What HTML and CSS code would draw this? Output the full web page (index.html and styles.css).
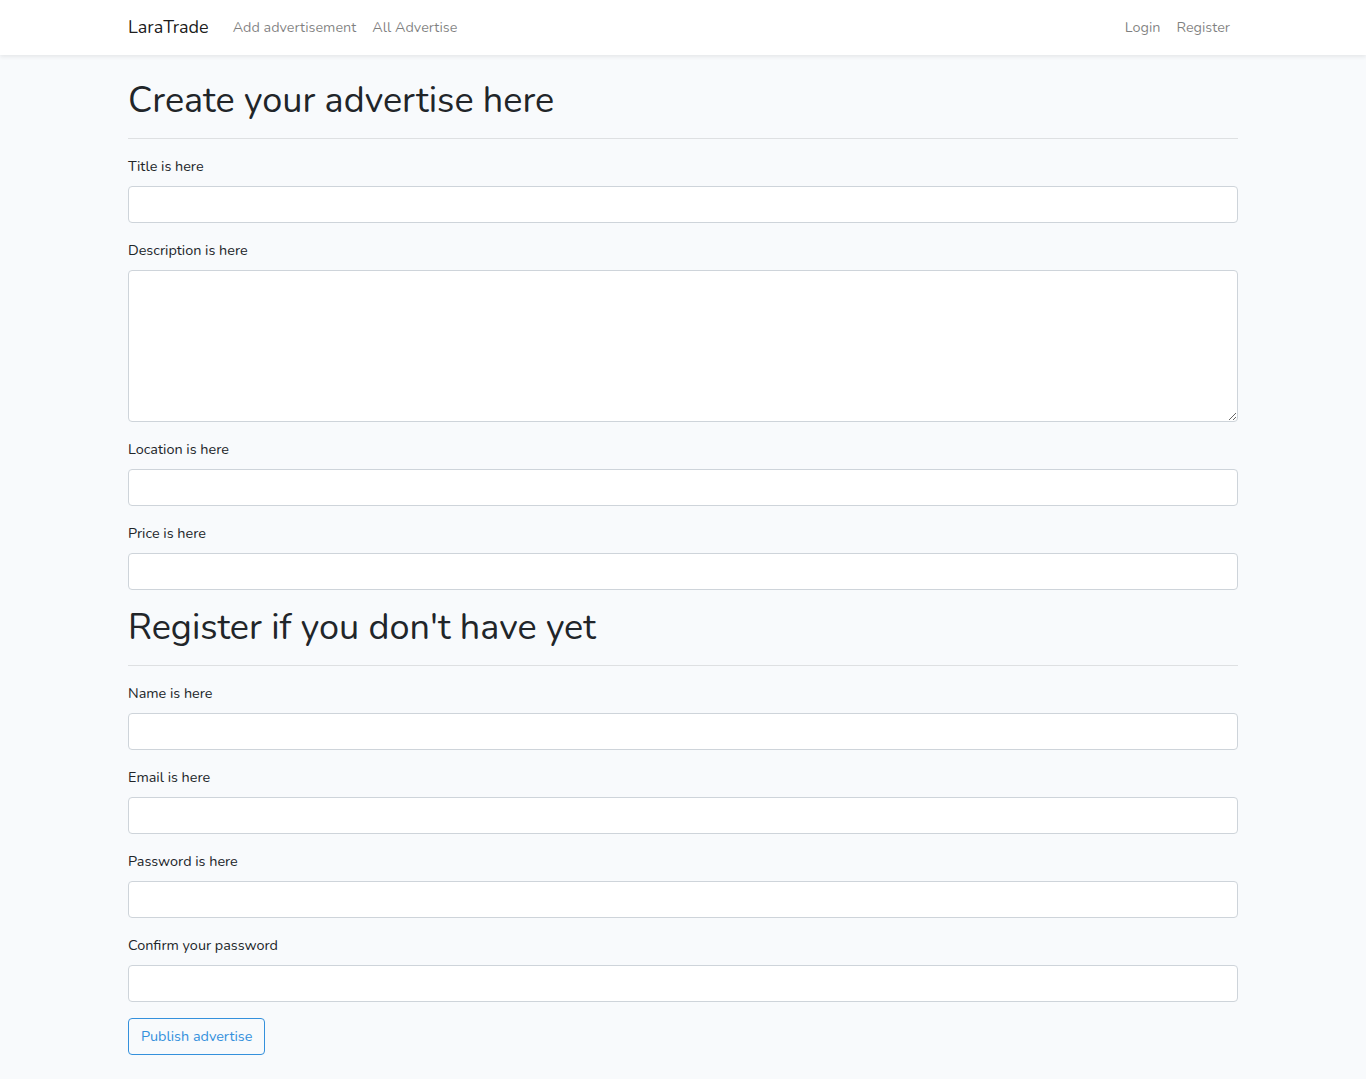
FILE: index.html
```html
<!DOCTYPE html>
<html lang="en">
<head>
<meta charset="utf-8">
<title>LaraTrade</title>
<link rel="stylesheet" href="styles.css">
</head>
<body>
<nav class="navbar">
  <div class="container nav-inner">
    <a class="brand" href="#">LaraTrade</a>
    <ul class="nav-list">
      <li><a class="nav-link" href="#">Add advertisement</a></li>
      <li><a class="nav-link" href="#">All Advertise</a></li>
    </ul>
    <ul class="nav-list nav-right">
      <li><a class="nav-link" href="#">Login</a></li>
      <li><a class="nav-link" href="#">Register</a></li>
    </ul>
  </div>
</nav>
<main class="main">
  <div class="container">
    <form class="form">
      <h1 class="heading">Create your advertise here</h1>
      <hr class="rule">
      <div class="form-group">
        <label class="label">Title is here</label>
        <input class="control" type="text">
      </div>
      <div class="form-group">
        <label class="label">Description is here</label>
        <textarea class="control textarea"></textarea>
      </div>
      <div class="form-group">
        <label class="label">Location is here</label>
        <input class="control" type="text">
      </div>
      <div class="form-group">
        <label class="label">Price is here</label>
        <input class="control" type="text">
      </div>
      <h1 class="heading">Register if you don't have yet</h1>
      <hr class="rule">
      <div class="form-group">
        <label class="label">Name is here</label>
        <input class="control" type="text">
      </div>
      <div class="form-group">
        <label class="label">Email is here</label>
        <input class="control" type="email">
      </div>
      <div class="form-group">
        <label class="label">Password is here</label>
        <input class="control" type="password">
      </div>
      <div class="form-group">
        <label class="label">Confirm your password</label>
        <input class="control" type="password">
      </div>
      <button class="btn" type="button">Publish advertise</button>
    </form>
  </div>
</main>
</body>
</html>
```
FILE: styles.css
```css
* { box-sizing: border-box; }
html, body { margin: 0; padding: 0; }
body {
  font-family: "Nunito", "Lato", sans-serif;
  font-size: 14.4px;
  line-height: 1.6;
  color: #212529;
  background: #f8fafc;
}
.container {
  width: 1140px;
  margin: 0 auto;
  padding: 0 15px;
}
.navbar {
  background: #fff;
  padding: 8px 0;
  box-shadow: 0 2px 4px rgba(0,0,0,.075);
}
.nav-inner {
  display: flex;
  align-items: center;
}
.brand {
  font-size: 18px;
  line-height: 1.6;
  padding: 5px 0;
  margin-right: 16px;
  color: rgba(0,0,0,.9);
  text-decoration: none;
}
.nav-list {
  display: flex;
  list-style: none;
  margin: 0;
  padding: 0;
}
.nav-right { margin-left: auto; }
.nav-link {
  display: block;
  padding: 8px 8px;
  color: rgba(0,0,0,.5);
  text-decoration: none;
}
.main { padding: 24px 0; }
.form { margin: 0; }
.heading {
  font-size: 36px;
  font-weight: 400;
  line-height: 43px;
  margin: 0 0 8px;
}
.rule {
  border: 0;
  border-top: 1px solid rgba(0,0,0,.1);
  margin: 16px 0;
}
.form-group { margin-bottom: 16px; }
.label {
  display: inline-block;
  margin-bottom: 8px;
}
.control {
  display: block;
  width: 100%;
  height: 37px;
  padding: 6px 12px;
  font: inherit;
  color: #495057;
  background: #fff;
  border: 1px solid #ced4da;
  border-radius: 4px;
  margin: 0;
}
.textarea {
  height: 152px;
  resize: vertical;
}
.btn {
  display: inline-block;
  font: inherit;
  padding: 6px 12px;
  color: #3490dc;
  background: transparent;
  border: 1px solid #3490dc;
  border-radius: 4px;
  cursor: pointer;
}
```
